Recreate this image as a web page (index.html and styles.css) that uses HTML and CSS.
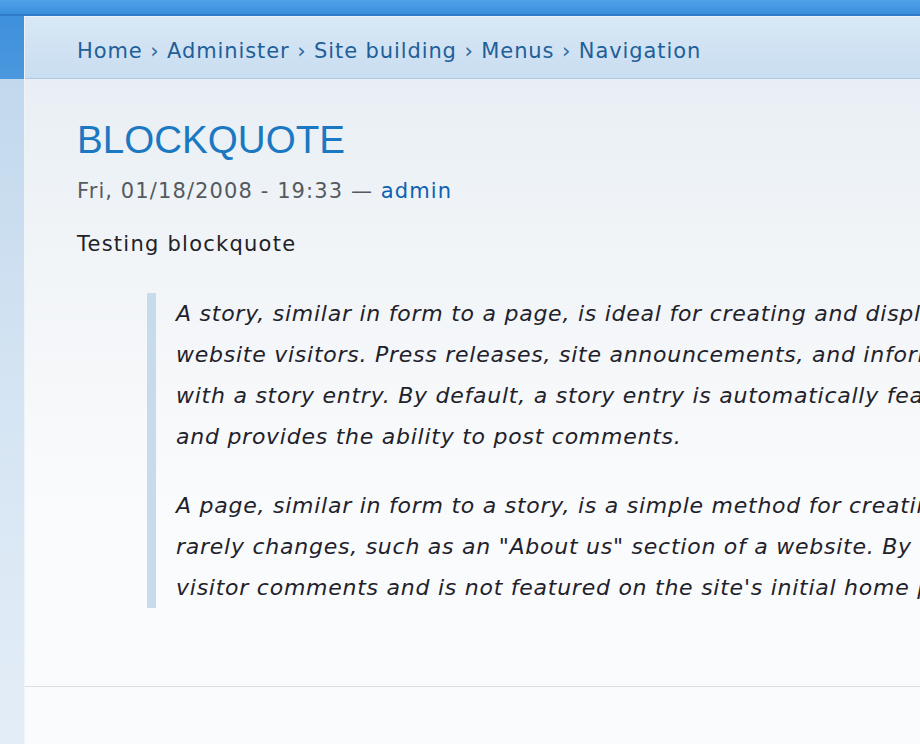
FILE: index.html
```html
<!DOCTYPE html>
<html lang="en">
<head>
  <meta charset="UTF-8">
  <meta name="viewport" content="width=device-width, initial-scale=1.0">
  <title>BLOCKQUOTE</title>
  <link rel="stylesheet" href="styles.css">
</head>
<body>

<div class="topbar"></div>

<div class="frame">
  <div class="rail"></div>

  <div class="panel">
    <div class="breadcrumb">
      <a href="#">Home</a> › <a href="#">Administer</a> › <a href="#">Site building</a> › <a href="#">Menus</a> › <a href="#">Navigation</a>
    </div>

    <div class="node">
      <h2 class="title">BLOCKQUOTE</h2>
      <p class="submitted">Fri, 01/18/2008 - 19:33 — <a href="#">admin</a></p>
      <p class="intro">Testing blockquote</p>

      <blockquote>
        <p>A story, similar in form to a page, is ideal for creating and displaying content that informs or engages<br>
        website visitors. Press releases, site announcements, and informal blog-like entries may all be created<br>
        with a story entry. By default, a story entry is automatically featured on the site's initial home page,<br>
        and provides the ability to post comments.</p>
        <p>A page, similar in form to a story, is a simple method for creating and displaying information that<br>
        rarely changes, such as an "About us" section of a website. By default, a page entry does not allow<br>
        visitor comments and is not featured on the site's initial home page.</p>
      </blockquote>
    </div>

    <div class="footer"></div>
  </div>
</div>

</body>
</html>
```

FILE: styles.css
```css
body {
  margin: 0;
  overflow: hidden;
  font-family: "DejaVu Sans", Verdana, sans-serif;
  background: #f9fafb;
}

a {
  text-decoration: none;
}

.topbar {
  height: 14px;
  background: linear-gradient(to bottom, #4ea2e8, #3c8edb);
  border-bottom: 2px solid #2f7bc6;
}

.frame {
  display: flex;
  height: 728px;
}

.rail {
  width: 24px;
  flex-shrink: 0;
  background: linear-gradient(to bottom, #3f90dc 0, #4a98de 63px, #c2d8ed 63px, #d6e5f3 400px, #e3edf7 100%);
  border-right: 1px solid #eef3f8;
}

.panel {
  flex: 1;
  min-width: 0;
  background: linear-gradient(to bottom, #e5edf3 0, #f2f5f8 260px, #fafbfc 500px);
}

.breadcrumb {
  height: 63px;
  box-sizing: border-box;
  padding: 21px 0 0 52px;
  font-size: 21px;
  line-height: 26px;
  letter-spacing: 0.9px;
  color: #2e6aa0;
  white-space: nowrap;
  background: linear-gradient(to bottom, #d8e8f5, #c9ddf1);
  border-top: 1px solid #e9f1f9;
  border-bottom: 1px solid #b5c9dc;
}

.breadcrumb a {
  color: #1f5f98;
}

.node {
  padding: 37px 0 0 52px;
  height: 607px;
  box-sizing: border-box;
}

.title {
  margin: 0;
  font-family: "Liberation Sans", Arial, sans-serif;
  font-weight: normal;
  font-size: 38.6px;
  line-height: 47px;
  color: #1b78c2;
}

.submitted {
  margin: 13px 0 0;
  font-size: 21px;
  line-height: 30px;
  letter-spacing: 1.1px;
  color: #555a60;
}

.submitted a {
  color: #0b62b3;
}

.intro {
  margin: 23px 0 0;
  font-size: 21px;
  line-height: 30px;
  letter-spacing: 1.25px;
  color: #1e2226;
}

blockquote {
  margin: 34px 0 0 70px;
  padding-left: 20px;
  border-left: 9px solid #c7dbed;
  font-style: italic;
  font-size: 22px;
  line-height: 41px;
  letter-spacing: 0.75px;
  color: #1f222b;
  white-space: nowrap;
}

blockquote p {
  margin: 28px 0 0;
}

blockquote p:first-child {
  margin-top: 0;
}

.footer {
  border-top: 1px solid #d9dfe5;
  height: 60px;
  background: #fafbfc;
}
```
